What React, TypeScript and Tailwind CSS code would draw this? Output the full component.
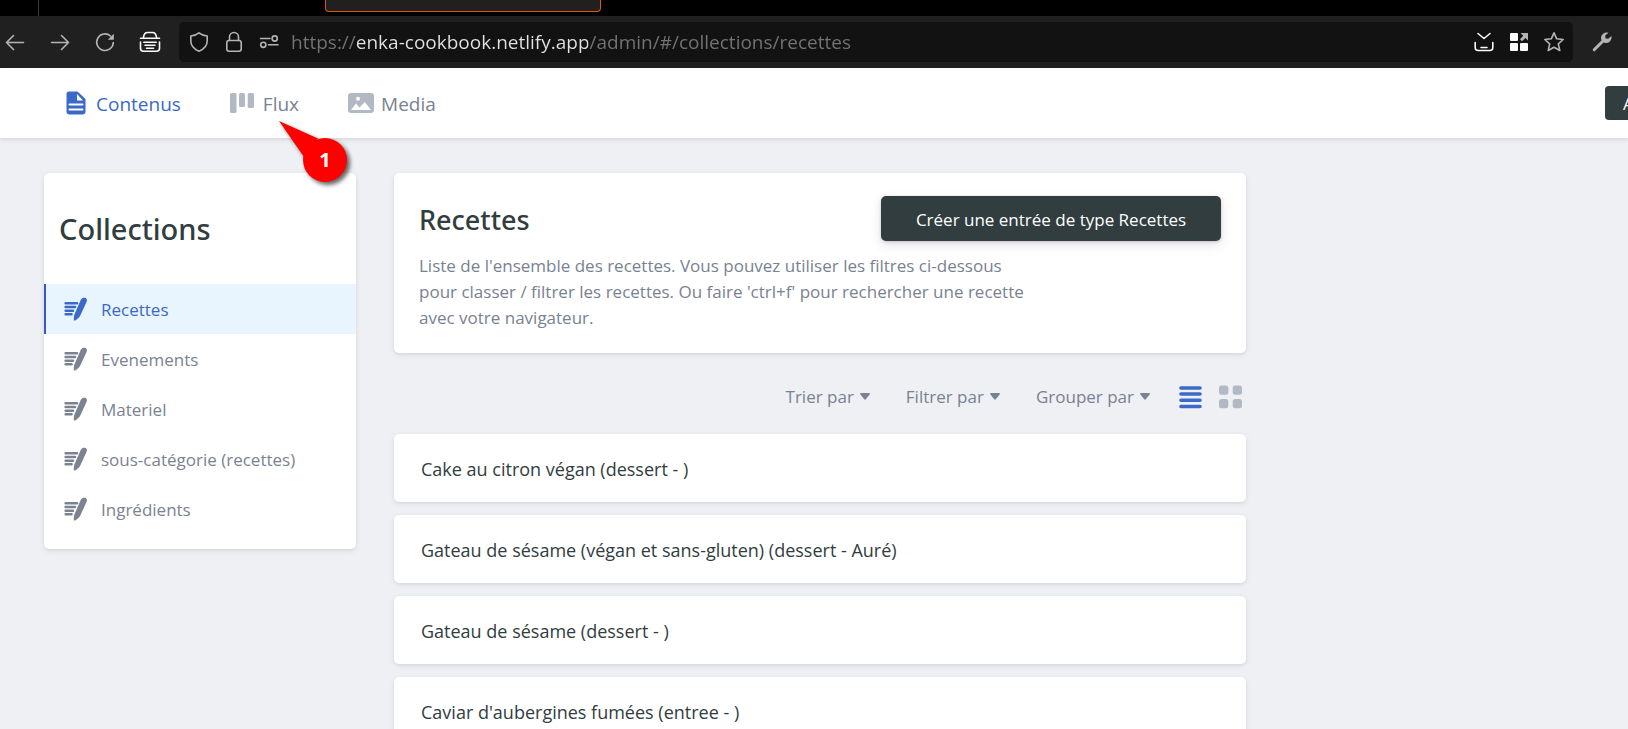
import type { ReactNode } from "react";

const collections = [
  "Recettes",
  "Evenements",
  "Materiel",
  "sous-catégorie (recettes)",
  "Ingrédients",
];

const entries = [
  "Cake au citron végan (dessert - )",
  "Gateau de sésame (végan et sans-gluten) (dessert - Auré)",
  "Gateau de sésame (dessert - )",
  "Caviar d'aubergines fumées (entree - )",
];

function ToolButton({ label, children }: { label: string; children: ReactNode }) {
  return (
    <button type="button" aria-label={label} className="flex size-6 shrink-0 items-center justify-center text-[#b4b4b4]">
      {children}
    </button>
  );
}

const line = {
  width: 22,
  height: 22,
  viewBox: "0 0 22 22",
  fill: "none",
  stroke: "currentColor",
  strokeWidth: 1.6,
  strokeLinecap: "round",
  strokeLinejoin: "round",
} as const;

function BrowserBar() {
  return (
    <div className="bg-[#202020]">
      <div className="flex h-4 bg-black">
        <div className="w-[39px] shrink-0 border-r border-[#3a3a3a]" />
        <div className="ml-[286px] h-3 w-[276px] rounded-b border border-t-0 border-[#e2520b] bg-[#202020]" />
      </div>
      <div className="flex h-[52px] items-center pr-1 pl-[3px]">
        <div className="flex items-center gap-[21px]">
          <ToolButton label="Précédent">
            <svg {...line}>
              <path d="M19.500 11.500H2.500M9.500 4.500l-7 7 7 7" />
            </svg>
          </ToolButton>
          <ToolButton label="Suivant">
            <svg {...line}>
              <path d="M2.500 11.500H19.500M12.500 4.500l7 7-7 7" />
            </svg>
          </ToolButton>
          <ToolButton label="Actualiser">
            <svg {...line}>
              <path d="M16.500 5A8.300 8.300 0 1 0 19.300 11.500" />
              <path d="M19.800 2.800v6h-6z" fill="currentColor" stroke="none" />
            </svg>
          </ToolButton>
          <ToolButton label="Panier">
            <svg {...line} className="text-[#fbfbfb]" strokeWidth={1.6}>
              <path d="M4.500 6C5 3 6.500 1.500 8.500 1.500h5C15.500 1.500 17 3 17.500 6M1.500 7.300h19M1.500 11v6.300a3 3 0 0 0 3 3h13a3 3 0 0 0 3-3V11M4.800 11.300h12.400M6 14.300h10M7.500 17.200h7" />
            </svg>
          </ToolButton>
        </div>
        <div className="ml-[17px] flex h-10 min-w-0 flex-1 items-center rounded-[5px] bg-[#121212] pr-[7px] pl-2">
          <div className="flex shrink-0 items-center gap-[11px]">
            <ToolButton label="Protection">
              <svg {...line}>
                <path d="M11 1.800c2.500 2 5.200 3 8.200 3.200v5c0 4.500-3.400 8.200-8.200 10.200C6.200 18.200 2.800 14.500 2.800 10V5C5.800 4.800 8.500 3.800 11 1.800z" />
              </svg>
            </ToolButton>
            <ToolButton label="Sécurité">
              <svg {...line}>
                <path d="M6.500 9.500V6a4.500 4.500 0 0 1 9 0v3.500" />
                <rect x="3.800" y="9.500" width="14.400" height="10.700" rx="2.200" />
              </svg>
            </ToolButton>
            <ToolButton label="Autorisations">
              <svg {...line}>
                <path d="M2.500 7.500h9.500M10.500 13.800h9.500" />
                <circle cx="16.700" cy="7.500" r="2.600" />
                <circle cx="5.300" cy="13.800" r="2.600" />
              </svg>
            </ToolButton>
          </div>
          <input
            type="text"
            readOnly
            aria-label="Adresse"
            value="https://enka-cookbook.netlify.app/admin/#/collections/recettes"
            className="ml-[10px] h-10 min-w-0 flex-1 bg-[linear-gradient(to_right,#747474_66px,#e4e4e4_66px,#e4e4e4_297px,#747474_297px)] bg-clip-text text-[19px] text-transparent outline-none"
          />
          <div className="flex shrink-0 items-center gap-[11px]">
            <ToolButton label="Enregistrer">
              <svg {...line} className="text-[#fbfbfb]">
                <path d="M5 2.500l6 5 6-5M2.200 11.500v5a3 3 0 0 0 3 3h11.600a3 3 0 0 0 3-3v-5M8 16.500h6" />
              </svg>
            </ToolButton>
            <ToolButton label="Applications">
              <svg width="22" height="22" viewBox="0 0 22 22" fill="#fbfbfb">
                <rect x="2" y="2" width="8" height="8" rx="1" />
                <rect x="2" y="12" width="8" height="8" rx="1" />
                <rect x="12" y="12" width="8" height="8" rx="1" />
                <path d="M12.500 2H20v7.500l-2.500-2.500-3.500 3.200-2-2L15.200 4.700z" fill="#b4b4b4" />
              </svg>
            </ToolButton>
            <ToolButton label="Marque-page">
              <svg {...line}>
                <path d="M11 1.800l2.700 6 6.500.7-4.900 4.400 1.500 6.600L11 16.200l-5.800 3.300 1.500-6.600L1.800 8.500l6.500-.7z" />
              </svg>
            </ToolButton>
          </div>
        </div>
        <div className="ml-[17px] flex w-[34px] shrink-0">
          <ToolButton label="Outils">
            <svg width="22" height="22" viewBox="0 0 22 22" fill="none">
              <path d="M3.200 18.800L12 10" stroke="currentColor" strokeWidth="3" strokeLinecap="round" />
              <path d="M17.500 1.800a5.600 5.600 0 0 0-7.300 6.600l3.600 3.600A5.600 5.600 0 0 0 20.300 5l-3 2.800-2.800-.4-.3-2.800z" fill="currentColor" />
            </svg>
          </ToolButton>
        </div>
      </div>
    </div>
  );
}

function PageIcon() {
  return (
    <svg width="20" height="24" viewBox="0 0 20 24">
      <path d="M3 .5h8.500L19.500 8v12.500a3 3 0 0 1-3 3H3.500a3 3 0 0 1-3-3V3A2.500 2.500 0 0 1 3 .5z" fill="#3a69c7" />
      <path d="M11 3v6.500h6z" fill="#fff" />
      <path d="M3.500 13.500h13M3.500 18.500h13" stroke="#fff" strokeWidth="2" strokeLinecap="round" />
    </svg>
  );
}

function BoardIcon() {
  return (
    <svg width="24" height="20" viewBox="0 0 24 20" fill="#b3b9c4">
      <rect width="6.500" height="20" rx="1.500" />
      <rect x="9" width="6" height="14" rx="1.500" />
      <rect x="17.700" width="6.300" height="15" rx="1.500" />
    </svg>
  );
}

function MediaIcon() {
  return (
    <svg width="26" height="20" viewBox="0 0 26 20">
      <rect width="26" height="20" rx="3" fill="#b3b9c4" />
      <circle cx="10" cy="5.700" r="2" fill="#fff" />
      <path d="M3 17l5-6.500 3.500 4L16.800 9 23 17z" fill="#fff" />
    </svg>
  );
}

function WriteIcon() {
  return (
    <svg width="23" height="24" viewBox="0 0 23 24" className="shrink-0">
      <path d="M1.600 6.300h11.500M1.600 10h9.500M1.600 13.700h7.500M1.600 17.300h6" stroke="currentColor" strokeWidth="2.400" strokeLinecap="round" />
      <path d="M16.800 2.700C17.800.6 20.500.2 21.800 1.100c1.300.9 1.400 2.300.7 3.800L16.300 18.500c-.8 1.700-3.300 4.200-5.100 5-.9.300-1.400 0-1.400-.8 0-1.900.1-4.200.7-5.500z" fill="currentColor" />
    </svg>
  );
}

function Header() {
  return (
    <header className="flex h-[70px] items-center justify-between overflow-hidden bg-white pl-[66px] text-[19px] text-[#798291]">
      <nav className="flex items-center gap-[49px]">
        <a href="#contenus" className="flex items-center gap-[10px] text-[#3a69c7]">
          <PageIcon />
          <span className="pt-0.5">Contenus</span>
        </a>
        <a href="#flux" className="flex items-center gap-[9px]">
          <BoardIcon />
          <span className="pt-0.5">Flux</span>
        </a>
        <a href="#media" className="flex items-center gap-[7px]">
          <MediaIcon />
          <span className="pt-0.5">Media</span>
        </a>
      </nav>
      <button type="button" className="-mr-28 h-[34px] w-[135px] shrink-0 rounded bg-[#313d3e] pt-0.5 pl-[18px] text-left text-[17px] text-white">
        Ajout rapide
      </button>
    </header>
  );
}

function Callout() {
  return (
    <div className="absolute top-[119px] left-[276px] h-[70px] w-[80px]">
      <svg width="80" height="70" viewBox="0 0 80 70" className="drop-shadow-[3px_3px_2px_rgba(0,0,0,0.6)]">
        <path d="M3 2L42 19.500 28 38z" fill="#ff0000" />
        <circle cx="49" cy="41" r="22" fill="#ff0000" />
      </svg>
      <span className="absolute top-[19px] left-[27px] flex size-11 items-center justify-center text-[20px] font-bold text-white">1</span>
    </div>
  );
}

const card = "rounded-[5px] bg-white shadow-[0_2px_6px_rgba(68,74,87,0.08),0_1px_3px_rgba(68,74,87,0.1)]";

function Sidebar() {
  return (
    <aside className={`w-[312px] shrink-0 self-start pb-[15px] ${card}`}>
      <h2 className="flex h-[111px] items-center pl-[15px] font-['Noto_Sans',sans-serif] text-[29px] font-medium text-[#313d3e]">
        Collections
      </h2>
      <ul>
        {collections.map((name, i) => (
          <li key={name}>
            <a
              href={`#${name}`}
              className={
                i === 0
                  ? "flex h-[50px] items-center gap-[14px] border-l-2 border-[#3a56c7] bg-[#e8f5fe] pl-[18px] text-[17px] text-[#3a69c7]"
                  : "flex h-[50px] items-center gap-[14px] border-l-2 border-transparent pl-[18px] text-[17px] text-[#7b8290]"
              }
            >
              <WriteIcon />
              <span className="pt-0.5">{name}</span>
            </a>
          </li>
        ))}
      </ul>
    </aside>
  );
}

function Caret() {
  return (
    <svg width="10" height="7" viewBox="0 0 10 7" fill="currentColor">
      <path d="M1 0h8c1 0 1.200.8.600 1.400L5.800 6.200c-.5.600-1.100.6-1.600 0L.4 1.400C-.2.800 0 0 1 0z" />
    </svg>
  );
}

function Controls() {
  return (
    <div className="flex h-[81px] items-center justify-end pt-[6px] pr-1">
      <div className="flex gap-9 text-[17px] font-medium text-[#798291]">
        {["Trier par", "Filtrer par", "Grouper par"].map((label) => (
          <button type="button" key={label} className="flex items-center gap-1.5">
            {label}
            <Caret />
          </button>
        ))}
      </div>
      <button type="button" aria-label="Liste" className="ml-[29px]">
        <svg width="23" height="24" viewBox="0 0 23 24" stroke="#3a69c7" strokeWidth="3.600" strokeLinecap="round">
          <path d="M2 3h19M2 9h19M2 15.300h19M2 21.500h19" />
        </svg>
      </button>
      <button type="button" aria-label="Grille" className="ml-[17px]">
        <svg width="23" height="24" viewBox="0 0 23 24" fill="#b3b9c4">
          <rect y=".5" width="9.300" height="9.300" rx="2.500" />
          <rect x="13.700" y=".5" width="9.300" height="9.300" rx="2.500" />
          <rect y="14" width="9.300" height="9.300" rx="2.500" />
          <rect x="13.700" y="14" width="9.300" height="9.300" rx="2.500" />
        </svg>
      </button>
    </div>
  );
}

export default function App() {
  return (
    <div className="relative h-screen overflow-hidden bg-[#eff0f4] font-['Open_Sans','Noto_Sans',sans-serif]">
      <BrowserBar />
      <div className="shadow-[0_2px_6px_rgba(68,74,87,0.08),0_1px_3px_rgba(68,74,87,0.1)]">
        <Header />
      </div>
      <div className="flex gap-[38px] px-11 pt-[35px]">
        <Sidebar />
        <main className="max-w-[852px] min-w-0 flex-1">
          <section className={`px-[25px] pt-[23px] pb-[22px] ${card}`}>
            <div className="flex items-center justify-between">
              <h1 className="pt-0.5 font-['Noto_Sans',sans-serif] text-[27px] leading-[43px] font-medium text-[#313d3e]">Recettes</h1>
              <button type="button" className="h-[45px] w-[340px] rounded-[5px] bg-[#313d3e] pt-0.5 text-[17px] text-white shadow-[0_4px_12px_rgba(68,74,87,0.15),0_1px_3px_rgba(68,74,87,0.25)]">
                Créer une entrée de type Recettes
              </button>
            </div>
            <p className="mt-3 max-w-[618px] text-[17px] leading-[26px] text-[#798291]">
              Liste de l'ensemble des recettes. Vous pouvez utiliser les filtres ci-dessous pour classer / filtrer les recettes. Ou faire 'ctrl+f' pour rechercher une recette avec votre navigateur.
            </p>
          </section>
          <Controls />
          <ul className="flex flex-col gap-[13px]">
            {entries.map((title) => (
              <li key={title} className={card}>
                <a href="#entree" className="flex h-[68px] items-center px-[27px] pt-0.5 text-[18px] text-[#313d3e]">
                  {title}
                </a>
              </li>
            ))}
          </ul>
        </main>
      </div>
      <Callout />
    </div>
  );
}
